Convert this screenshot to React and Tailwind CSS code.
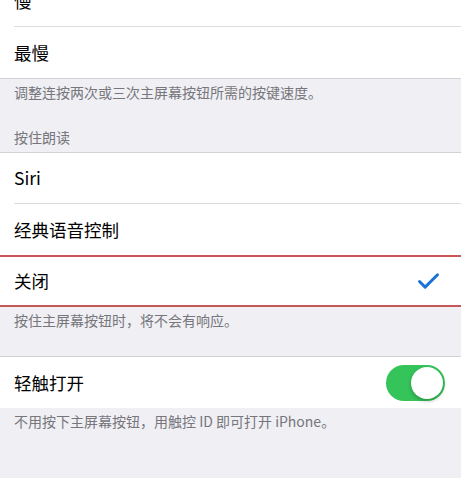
import { Check } from "lucide-react";

const font = { fontFamily: '"Noto Sans CJK SC", "Noto Sans", sans-serif' };

const Row = ({ label, inset = true, children }) => (
  <div className="h-[51px] flex items-center bg-white pl-[14px]">
    <div
      className={`flex-1 h-full flex items-center pr-[16px] ${
        inset ? "border-b border-[#dcdce0]" : ""
      }`}
    >
      <span className="flex-1 text-[17.5px] leading-none text-black">{label}</span>
      {children}
    </div>
  </div>
);

const Footer = ({ children }) => (
  <p className="px-[14px] text-[14px] leading-[20px] text-[#76767b]">{children}</p>
);

export default function App() {
  return (
    <div className="w-[461px] h-[478px] overflow-hidden bg-[#efeff4]" style={font}>
      {/* speed group */}
      <div className="-mt-[24px] border-b border-[#d2d2d6]">
        <Row label="慢" />
        <Row label="最慢" inset={false} />
      </div>
      <div className="h-[73px] pt-[3px]">
        <Footer>调整连按两次或三次主屏幕按钮所需的按键速度。</Footer>
        <p className="mt-[25px] px-[14px] text-[14px] leading-[20px] text-[#76767b]">按住朗读</p>
      </div>

      {/* press and hold */}
      <div className="border-t border-[#d2d2d6]">
        <Row label="Siri" />
        <Row label="经典语音控制" inset={false} />
        <div className="h-[52px] flex items-center bg-white pl-[14px] pr-[19px] border-t-2 border-b-2 border-[#c65858]">
          <span className="flex-1 text-[17.5px] leading-none text-black">关闭</span>
          <Check className="w-[27px] h-[27px] text-[#1a72d6]" strokeWidth={2.6} />
        </div>
      </div>
      <div className="h-[49px] pt-[3px]">
        <Footer>按住主屏幕按钮时，将不会有响应。</Footer>
      </div>

      {/* rest finger */}
      <div className="border-t border-[#d2d2d6]">
        <Row label="轻触打开" inset={false}>
          <div className="w-[59px] h-[36px] rounded-full bg-[#35c45a] flex items-center justify-end p-[2px]">
            <div className="w-[32px] h-[32px] rounded-full bg-white shadow-[0_2px_4px_rgba(0,0,0,0.25)]" />
          </div>
        </Row>
      </div>
      <div className="pt-[3px]">
        <Footer>不用按下主屏幕按钮，用触控 ID 即可打开 iPhone。</Footer>
      </div>
    </div>
  );
}
